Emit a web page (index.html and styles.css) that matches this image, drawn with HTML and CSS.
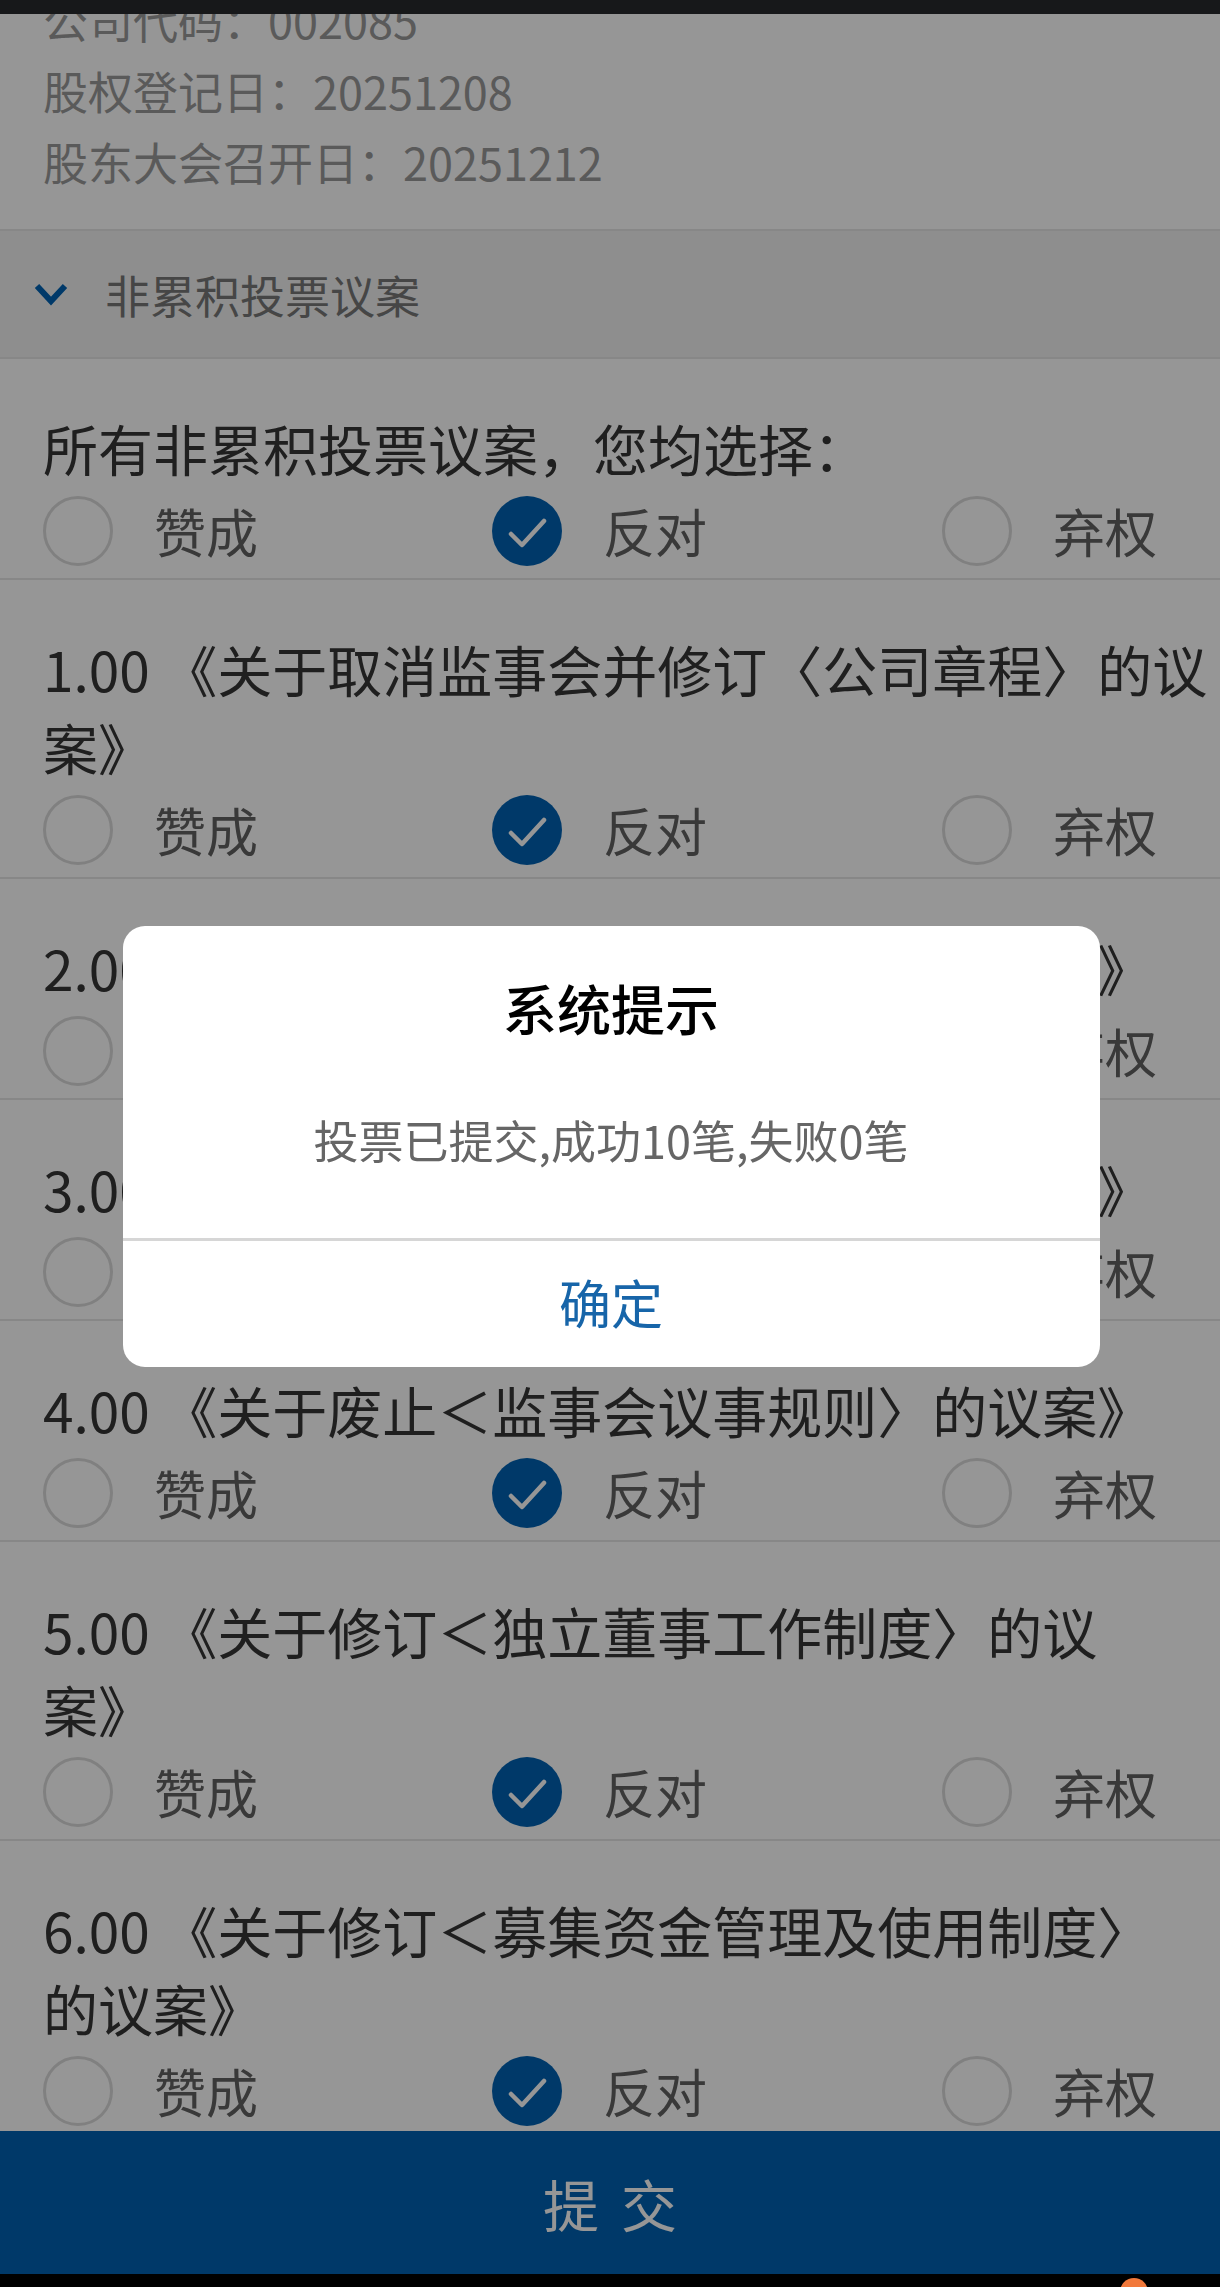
FILE: index.html
```html
<!DOCTYPE html>
<html lang="zh-CN">
<head>
<meta charset="utf-8">
<title>网络投票</title>
<link rel="stylesheet" href="styles.css">
</head>
<body>
<div class="statusbar"></div>

<main class="page">
  <section class="info">
    <p>公司代码：002085</p>
    <p>股权登记日：20251208</p>
    <p>股东大会召开日：20251212</p>
  </section>

  <div class="group-head">
    <svg class="chevron" width="34" height="24" viewBox="0 0 34 24"><path d="M3 4 L17 19 L31 4"/></svg>
    <span>非累积投票议案</span>
  </div>

  <div class="motion">
    <div class="motion-title">所有非累积投票议案，您均选择：</div>
    <div class="options">
      <div class="option"><span class="radio"></span><span class="opt-label">赞成</span></div>
      <div class="option"><span class="radio checked"><svg viewBox="0 0 70 70"><polyline points="19,38 30,49 52,25"/></svg></span><span class="opt-label">反对</span></div>
      <div class="option"><span class="radio"></span><span class="opt-label">弃权</span></div>
    </div>
  </div>

  <div class="motion">
    <div class="motion-title">1.00 《关于取消监事会并修订〈公司章程〉的议案》</div>
    <div class="options">
      <div class="option"><span class="radio"></span><span class="opt-label">赞成</span></div>
      <div class="option"><span class="radio checked"><svg viewBox="0 0 70 70"><polyline points="19,38 30,49 52,25"/></svg></span><span class="opt-label">反对</span></div>
      <div class="option"><span class="radio"></span><span class="opt-label">弃权</span></div>
    </div>
  </div>

  <div class="motion">
    <div class="motion-title">2.00 《关于修订＜董事会议事规则〉的议案》</div>
    <div class="options">
      <div class="option"><span class="radio"></span><span class="opt-label">赞成</span></div>
      <div class="option"><span class="radio checked"><svg viewBox="0 0 70 70"><polyline points="19,38 30,49 52,25"/></svg></span><span class="opt-label">反对</span></div>
      <div class="option"><span class="radio"></span><span class="opt-label">弃权</span></div>
    </div>
  </div>

  <div class="motion">
    <div class="motion-title">3.00 《关于修订＜股东会议事规则〉的议案》</div>
    <div class="options">
      <div class="option"><span class="radio"></span><span class="opt-label">赞成</span></div>
      <div class="option"><span class="radio checked"><svg viewBox="0 0 70 70"><polyline points="19,38 30,49 52,25"/></svg></span><span class="opt-label">反对</span></div>
      <div class="option"><span class="radio"></span><span class="opt-label">弃权</span></div>
    </div>
  </div>

  <div class="motion">
    <div class="motion-title">4.00 《关于废止＜监事会议事规则〉的议案》</div>
    <div class="options">
      <div class="option"><span class="radio"></span><span class="opt-label">赞成</span></div>
      <div class="option"><span class="radio checked"><svg viewBox="0 0 70 70"><polyline points="19,38 30,49 52,25"/></svg></span><span class="opt-label">反对</span></div>
      <div class="option"><span class="radio"></span><span class="opt-label">弃权</span></div>
    </div>
  </div>

  <div class="motion">
    <div class="motion-title">5.00 《关于修订＜独立董事工作制度〉的议<br>案》</div>
    <div class="options">
      <div class="option"><span class="radio"></span><span class="opt-label">赞成</span></div>
      <div class="option"><span class="radio checked"><svg viewBox="0 0 70 70"><polyline points="19,38 30,49 52,25"/></svg></span><span class="opt-label">反对</span></div>
      <div class="option"><span class="radio"></span><span class="opt-label">弃权</span></div>
    </div>
  </div>

  <div class="motion">
    <div class="motion-title">6.00 《关于修订＜募集资金管理及使用制度〉<br>的议案》</div>
    <div class="options">
      <div class="option"><span class="radio"></span><span class="opt-label">赞成</span></div>
      <div class="option"><span class="radio checked"><svg viewBox="0 0 70 70"><polyline points="19,38 30,49 52,25"/></svg></span><span class="opt-label">反对</span></div>
      <div class="option"><span class="radio"></span><span class="opt-label">弃权</span></div>
    </div>
  </div>
</main>

<div class="submit-bar">提交</div>
<div class="navbar"><span class="float-dot"></span></div>

<div class="mask">
  <div class="dialog">
    <div class="dialog-body">
      <h2 class="dialog-title">系统提示</h2>
      <p class="dialog-msg">投票已提交,成功10笔,失败0笔</p>
    </div>
    <div class="dialog-btn">确定</div>
  </div>
</div>
</body>
</html>
```

FILE: styles.css
```css
* { box-sizing: border-box; }

html, body {
  margin: 0;
  padding: 0;
  background: #ffffff;
  font-family: "Noto Sans CJK SC", "Noto Sans", sans-serif;
  overflow: hidden;
}

.statusbar {
  position: fixed;
  top: 0;
  left: 0;
  right: 0;
  height: 14px;
  background: #17181a;
  z-index: 30;
}

.page {
  display: flex;
  flex-direction: column;
}

.info {
  margin-top: -16px;
  padding: 0 0 32px 43px;
}

.info p {
  margin: 0;
  font-size: 45px;
  line-height: 71px;
  color: #999999;
}

.group-head {
  display: flex;
  align-items: center;
  gap: 37px;
  height: 130px;
  padding-left: 34px;
  background: #f1f2f2;
  border-top: 2px solid #e6e6e6;
  border-bottom: 2px solid #e6e6e6;
  font-size: 45px;
  color: #777777;
}

.chevron path {
  fill: none;
  stroke: #0062b3;
  stroke-width: 6;
  stroke-linecap: butt;
  stroke-linejoin: miter;
}

.motion {
  padding: 49px 0 9px 43px;
  border-bottom: 2px solid #e6e6e6;
}

.motion-title {
  font-size: 55px;
  line-height: 78px;
  color: #363636;
}

.options {
  display: grid;
  grid-template-columns: 449px 450px 1fr;
  align-items: center;
  height: 76px;
  margin-top: 7px;
}

.option {
  display: flex;
  align-items: center;
  gap: 41px;
}

.radio {
  width: 70px;
  height: 70px;
  flex: none;
  border-radius: 50%;
  border: 3px solid #dadada;
  display: flex;
  align-items: center;
  justify-content: center;
}

.radio.checked {
  border: none;
  background: #0062b3;
}

.radio svg {
  width: 70px;
  height: 70px;
}

.radio polyline {
  fill: none;
  stroke: #ffffff;
  stroke-width: 4.5;
  stroke-linecap: round;
  stroke-linejoin: round;
}

.opt-label {
  font-size: 52px;
  line-height: 76px;
  color: #626262;
}

.submit-bar {
  position: fixed;
  left: 0;
  right: 0;
  bottom: 13px;
  height: 143px;
  background: #0062b3;
  color: #ffffff;
  font-size: 56px;
  letter-spacing: 22px;
  text-indent: 22px;
  display: flex;
  align-items: center;
  justify-content: center;
  z-index: 5;
}

.navbar {
  position: fixed;
  left: 0;
  right: 0;
  bottom: 0;
  height: 13px;
  background: #000000;
  overflow: hidden;
  z-index: 30;
}

.float-dot {
  position: absolute;
  left: 1120px;
  top: 4px;
  width: 28px;
  height: 28px;
  border-radius: 50%;
  background: #f2793b;
}

.mask {
  position: fixed;
  inset: 0;
  background: rgba(0, 0, 0, 0.41);
  display: flex;
  align-items: center;
  justify-content: center;
  padding-top: 6px;
  z-index: 20;
}

.dialog {
  width: 977px;
  margin-left: 2px;
  background: #ffffff;
  border-radius: 22px;
  overflow: hidden;
  text-align: center;
}

.dialog-body {
  padding: 44px 40px 68px;
}

.dialog-title {
  margin: 0;
  font-size: 54px;
  line-height: 76px;
  font-weight: 500;
  color: #000000;
}

.dialog-msg {
  margin: 64px 0 0;
  font-size: 45px;
  line-height: 60px;
  color: #666666;
}

.dialog-btn {
  border-top: 3px solid #d6d6d6;
  height: 129px;
  line-height: 122px;
  font-size: 52px;
  color: #1765a9;
}
```
